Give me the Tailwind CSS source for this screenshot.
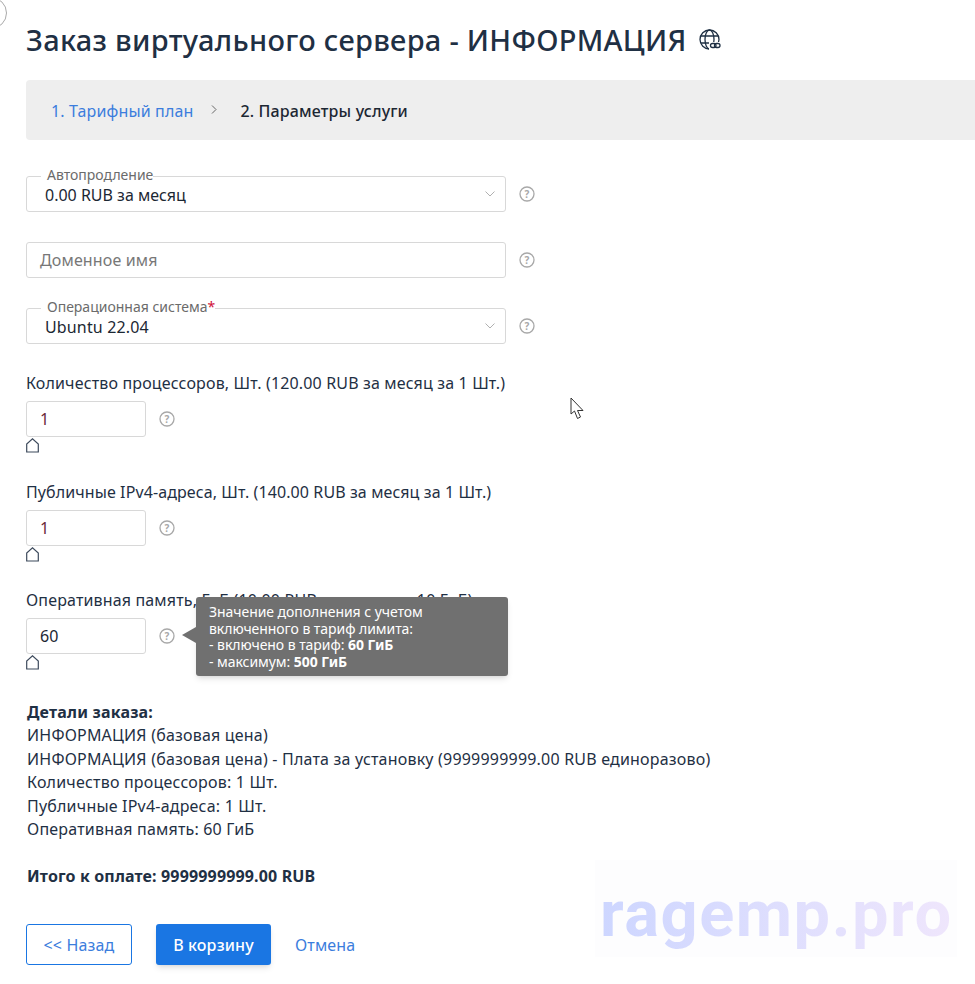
<!DOCTYPE html>
<html lang="ru">
<head>
  <meta charset="UTF-8">
  <meta name="viewport" content="width=device-width, initial-scale=1.0">
  <title>Заказ виртуального сервера</title>
  <script src="https://cdn.jsdelivr.net/npm/@tailwindcss/browser@4"></script>
</head>
<body class="bg-white text-[#1f3044] font-['Noto_Sans',sans-serif] text-[16px] tracking-[0.15px] overflow-hidden">
  <div class="relative w-[975px] h-[984px] overflow-hidden pl-[26px]">
    <!-- corner circle -->
    <div class="absolute -left-[25px] -top-[3px] w-[32px] h-[32px] rounded-full border border-[#aaaaaa]"></div>

    <!-- heading -->
    <div class="flex items-center h-[80px] pb-[1px]">
      <h1 class="text-[29px] font-medium tracking-[0.3px] leading-none">Заказ виртуального сервера - ИНФОРМАЦИЯ</h1>
      <svg class="ml-[12px] w-[22px] h-[22px]" viewBox="0 0 22 22" fill="none" stroke="#1f3044" stroke-width="1.3">
        <circle cx="10.500" cy="10.500" r="9.500"/>
        <ellipse cx="10.500" cy="10.500" rx="4.500" ry="9.500"/>
        <path d="M2 7h17M2 14h17"/>
        <path d="M10 13h12v8H10z" fill="#fff" stroke="none"/>
        <rect x="11.500" y="14.500" width="5.500" height="4" rx="2"/>
        <rect x="15.500" y="14.500" width="5.500" height="4" rx="2"/>
      </svg>
    </div>

    <!-- steps -->
    <div class="flex items-center h-[60px] w-[960px] rounded-l-[4px] bg-[#eeeeee] pl-[25px] pt-[1px]">
      <a class="text-[#3b7ddd]">1. Тарифный план</a>
      <svg class="ml-[18px] mr-[23px] mb-[3px] w-[6px] h-[9px]" viewBox="0 0 6 9" fill="none" stroke="#666666"><path d="M1 0.500 5 4.500 1 8.500"/></svg>
      <span class="font-medium text-[#1c2733]">2. Параметры услуги</span>
    </div>

    <form class="flex flex-col mt-[36px]">
      <!-- autorenew -->
      <div class="flex items-center h-[36px]">
        <div class="relative w-[480px] h-[36px] rounded-[3px] border border-[#d8d8d8] pl-[18px] flex items-center text-[#1c2733]">
          <span class="absolute left-[14px] -top-[10px] bg-white pl-[6px] text-[14px] tracking-normal leading-[16px] text-[#6b6b6b]">Автопродление</span>
          <span class="pt-[1px] tracking-normal">0.00 RUB за месяц</span>
          <svg class="absolute right-[10px] top-[14px] w-[10px] h-[6px]" viewBox="0 0 10 6" fill="none" stroke="#b0b0b0"><path d="M0.500 0.500 5 5 9.500 0.500"/></svg>
        </div>
        <svg class="ml-[13px] w-[16px] h-[16px]" viewBox="0 0 16 16"><circle cx="8" cy="8" r="7" fill="none" stroke="#a8a8a8" stroke-width="1.300"/><text x="8" y="11.500" text-anchor="middle" font-size="10" font-weight="700" fill="#a8a8a8" font-family="Noto Sans">?</text></svg>
      </div>

      <!-- domain -->
      <div class="flex items-center h-[36px] mt-[30px]">
        <div class="w-[480px] h-[36px] rounded-[3px] border border-[#d8d8d8] pl-[13px] flex items-center text-[#777777]">Доменное имя</div>
        <svg class="ml-[13px] w-[16px] h-[16px]" viewBox="0 0 16 16"><circle cx="8" cy="8" r="7" fill="none" stroke="#a8a8a8" stroke-width="1.300"/><text x="8" y="11.500" text-anchor="middle" font-size="10" font-weight="700" fill="#a8a8a8" font-family="Noto Sans">?</text></svg>
      </div>

      <!-- os -->
      <div class="flex items-center h-[36px] mt-[30px]">
        <div class="relative w-[480px] h-[36px] rounded-[3px] border border-[#d8d8d8] pl-[18px] flex items-center text-[#1c2733]">
          <span class="absolute left-[14px] -top-[10px] bg-white pl-[6px] text-[14px] tracking-normal leading-[16px] text-[#6b6b6b]">Операционная система<span class="text-[#d0103a]">*</span></span>
          <span class="pt-[1px]">Ubuntu 22.04</span>
          <svg class="absolute right-[10px] top-[14px] w-[10px] h-[6px]" viewBox="0 0 10 6" fill="none" stroke="#b0b0b0"><path d="M0.500 0.500 5 5 9.500 0.500"/></svg>
        </div>
        <svg class="ml-[13px] w-[16px] h-[16px]" viewBox="0 0 16 16"><circle cx="8" cy="8" r="7" fill="none" stroke="#a8a8a8" stroke-width="1.300"/><text x="8" y="11.500" text-anchor="middle" font-size="10" font-weight="700" fill="#a8a8a8" font-family="Noto Sans">?</text></svg>
      </div>

      <!-- cpu -->
      <label class="block mt-[29px] h-[20px] leading-[20px] whitespace-nowrap">Количество процессоров, Шт. (120.00 RUB за месяц за 1 Шт.)</label>
      <div class="flex items-center h-[36px] mt-[8px]">
        <div class="w-[120px] h-[36px] rounded-[3px] border border-[#d8d8d8] pl-[13px] flex items-center text-[#6a2a3a]">1</div>
        <svg class="ml-[13px] w-[16px] h-[16px]" viewBox="0 0 16 16"><circle cx="8" cy="8" r="7" fill="none" stroke="#a8a8a8" stroke-width="1.300"/><text x="8" y="11.500" text-anchor="middle" font-size="10" font-weight="700" fill="#a8a8a8" font-family="Noto Sans">?</text></svg>
      </div>
      <svg class="mt-[1px] w-[13px] h-[15px]" viewBox="0 0 13 15" fill="none" stroke="#3d4a5c" stroke-width="1.200"><path d="M0.700 14V6L6.500 0.800 12.300 6V14Z"/></svg>

      <!-- ipv4 -->
      <label class="block mt-[29px] h-[20px] leading-[20px] whitespace-nowrap tracking-[0.1px]">Публичные IPv4-адреса, Шт. (140.00 RUB за месяц за 1 Шт.)</label>
      <div class="flex items-center h-[36px] mt-[8px]">
        <div class="w-[120px] h-[36px] rounded-[3px] border border-[#d8d8d8] pl-[13px] flex items-center text-[#6a2a3a]">1</div>
        <svg class="ml-[13px] w-[16px] h-[16px]" viewBox="0 0 16 16"><circle cx="8" cy="8" r="7" fill="none" stroke="#a8a8a8" stroke-width="1.300"/><text x="8" y="11.500" text-anchor="middle" font-size="10" font-weight="700" fill="#a8a8a8" font-family="Noto Sans">?</text></svg>
      </div>
      <svg class="mt-[1px] w-[13px] h-[15px]" viewBox="0 0 13 15" fill="none" stroke="#3d4a5c" stroke-width="1.200"><path d="M0.700 14V6L6.500 0.800 12.300 6V14Z"/></svg>

      <!-- ram -->
      <label class="block mt-[28px] h-[20px] leading-[20px] whitespace-nowrap">Оперативная память, ГиБ (10.00 RUB за месяц за 10 ГиБ)</label>
      <div class="relative flex items-center h-[36px] mt-[8px]">
        <div class="w-[120px] h-[36px] rounded-[3px] border border-[#d8d8d8] pl-[13px] flex items-center text-[#1c2733]">60</div>
        <svg class="ml-[13px] w-[16px] h-[16px]" viewBox="0 0 16 16"><circle cx="8" cy="8" r="7" fill="none" stroke="#a8a8a8" stroke-width="1.300"/><text x="8" y="11.500" text-anchor="middle" font-size="10" font-weight="700" fill="#a8a8a8" font-family="Noto Sans">?</text></svg>
        <!-- tooltip -->
        <div class="absolute left-[170px] -top-[21px] w-[312px] h-[79px] rounded-[3px] bg-[#707070] pl-[13px] pt-[7px] text-[14px] tracking-[-0.05px] leading-[16.500px] text-white shadow-md">
          <span class="absolute -left-[14px] top-[30px] w-0 h-0 border-y-[8px] border-y-transparent border-r-[14px] border-r-[#707070]"></span>
          Значение дополнения с учетом<br>включенного в тариф лимита:<br>- включено в тариф: <b>60 ГиБ</b><br>- максимум: <b>500 ГиБ</b>
        </div>
      </div>
      <svg class="mt-[1px] w-[13px] h-[15px]" viewBox="0 0 13 15" fill="none" stroke="#3d4a5c" stroke-width="1.200"><path d="M0.700 14V6L6.500 0.800 12.300 6V14Z"/></svg>

      <!-- order details -->
      <div class="mt-[31px] ml-[1px] leading-[23.400px] whitespace-nowrap tracking-[0.2px]">
        <b class="font-bold">Детали заказа:</b><br>
        ИНФОРМАЦИЯ (базовая цена)<br>
        ИНФОРМАЦИЯ (базовая цена) - Плата за установку (9999999999.00 RUB единоразово)<br>
        Количество процессоров: 1 Шт.<br>
        Публичные IPv4-адреса: 1 Шт.<br>
        Оперативная память: 60 ГиБ
      </div>
      <p class="mt-[23px] ml-[1px] font-bold leading-[24px]">Итого к оплате: 9999999999.00 RUB</p>

      <!-- actions -->
      <div class="flex items-center mt-[36px]">
        <a class="flex items-center justify-center w-[106px] h-[41px] rounded-[3px] border border-[#1a76e3] text-[#3b7ddd]">&lt;&lt; Назад</a>
        <a class="flex items-center justify-center ml-[24px] w-[115px] h-[41px] rounded-[3px] bg-[#1a76e3] text-white font-medium shadow-md">В корзину</a>
        <a class="ml-[24px] text-[#3b7ddd]">Отмена</a>
      </div>
    </form>

    <!-- watermark -->
    <div class="absolute left-[595px] top-[860px] w-[362px] h-[97px] bg-[#fdfdfe]"></div>
    <div class="absolute left-[600px] top-[876px] text-[65px] font-['Roboto',sans-serif] font-bold leading-[76px] tracking-[1.500px] text-transparent bg-clip-text bg-gradient-to-r from-[#cdd6ff] to-[#efe6fc]">ragemp.pro</div>

    <!-- cursor -->
    <svg class="absolute left-[570px] top-[397px] w-[15px] h-[24px]" viewBox="0 0 15 24" fill="#fff" stroke="#333333"><path d="M1 1V17L4.500 14 7.500 21.500 10.500 20 7.500 13.500H13Z"/></svg>
  </div>
</body>
</html>
